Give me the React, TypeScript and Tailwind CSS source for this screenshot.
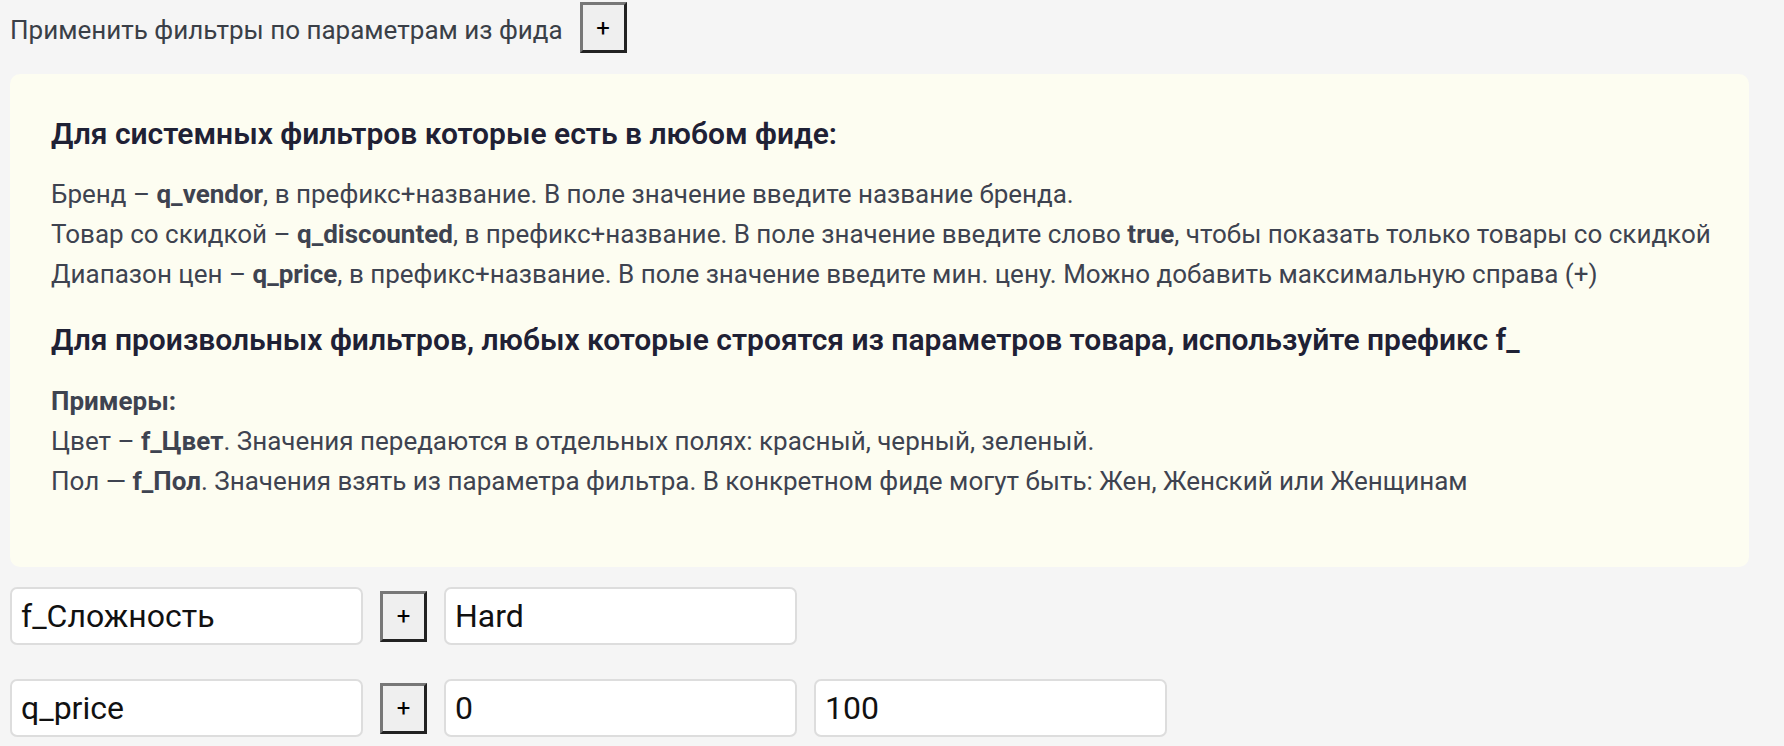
const PlusButton = () => (
  <button
    type="button"
    className="w-[47px] h-[51px] shrink-0 bg-[#efefef] border-[3px] border-t-[#777777] border-l-[#777777] border-b-[#222222] border-r-[#222222] text-[24px] leading-none text-black"
  >
    +
  </button>
);

const Field = ({ value }: { value: string }) => (
  <input
    defaultValue={value}
    className="w-[353px] h-[58px] shrink-0 bg-white border-2 border-[#dddddd] rounded-[7px] px-[9px] text-[32px] text-[#111111] outline-none"
  />
);

const App = () => {
  return (
    <div className="min-h-screen bg-[#f5f5f5] pl-[10px] pr-[35px] pt-[2px] pb-[10px] font-['Roboto',sans-serif]">
      <div className="flex items-center gap-[17px]">
        <span className="mt-[5px] text-[26px] text-[#3a3f47]">Применить фильтры по параметрам из фида</span>
        <PlusButton />
      </div>

      <div className="mt-[21px] rounded-[10px] bg-[#fdfdf1] px-[41px] pt-[40px] pb-[66px] text-[26px] leading-[40px] text-[#3e4350]">
        <h3 className="text-[30px] font-semibold text-[#1f2135]">Для системных фильтров которые есть в любом фиде:</h3>
        <div className="mt-[20px] whitespace-nowrap">
          <div>
            Бренд – <b>q_vendor</b>, в префикс+название. В поле значение введите название бренда.
          </div>
          <div>
            Товар со скидкой – <b>q_discounted</b>, в префикс+название. В поле значение введите слово <b>true</b>, чтобы показать только товары со скидкой
          </div>
          <div>
            Диапазон цен – <b>q_price</b>, в префикс+название. В поле значение введите мин. цену. Можно добавить максимальную справа (+)
          </div>
        </div>

        <h3 className="mt-[26px] text-[30px] font-semibold text-[#1f2135]">
          Для произвольных фильтров, любых которые строятся из параметров товара, используйте префикс f_
        </h3>
        <div className="mt-[21px]">
          <div className="font-bold">Примеры:</div>
          <div>
            Цвет – <b>f_Цвет</b>. Значения передаются в отдельных полях: красный, черный, зеленый.
          </div>
          <div>
            Пол — <b>f_Пол</b>. Значения взять из параметра фильтра. В конкретном фиде могут быть: Жен, Женский или Женщинам
          </div>
        </div>
      </div>

      <div className="mt-[20px] flex flex-col gap-[34px]">
        <div className="flex items-center gap-[17px]">
          <Field value="f_Сложность" />
          <PlusButton />
          <Field value="Hard" />
        </div>
        <div className="flex items-center gap-[17px]">
          <Field value="q_price" />
          <PlusButton />
          <Field value="0" />
          <Field value="100" />
        </div>
      </div>
    </div>
  );
};

export default App;
